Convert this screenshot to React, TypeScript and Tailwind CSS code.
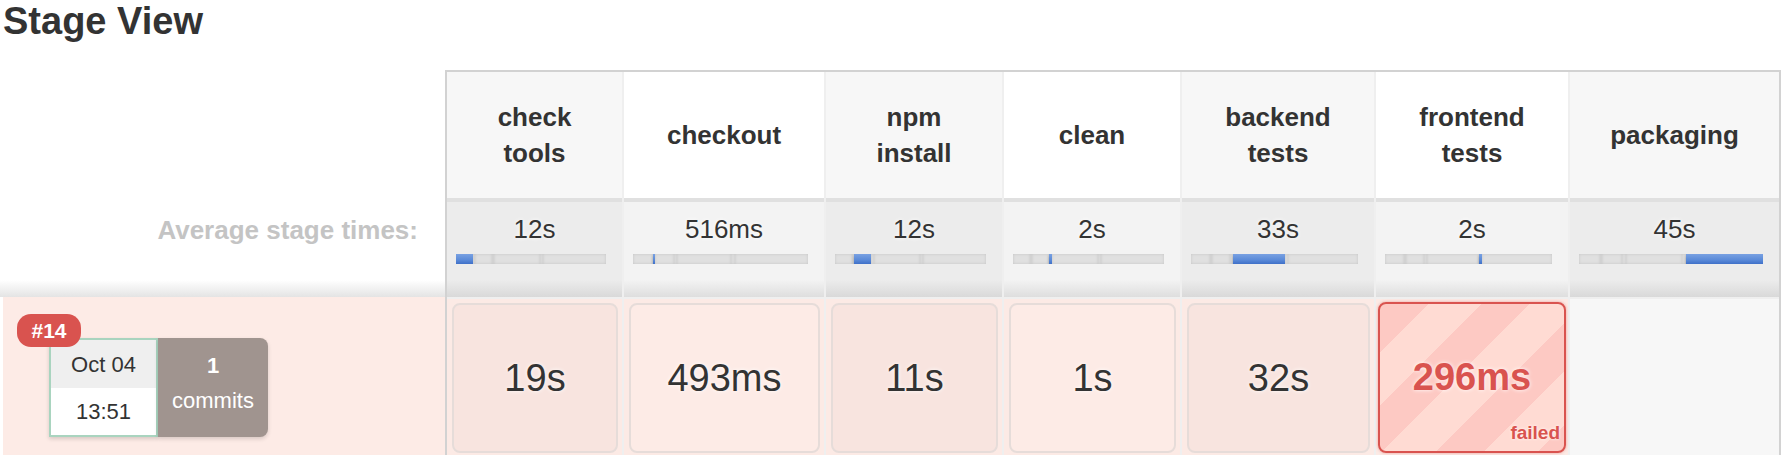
import React from "react";

type Stage = {
  name: string[];
  avg: string;
  avgSec: number;
  time: string;
  width: string;
  failed?: boolean;
  skipped?: boolean;
};

const stages: Stage[] = [
  { name: ["check", "tools"], avg: "12s", avgSec: 12, time: "19s", width: "w-[175px]" },
  { name: ["checkout"], avg: "516ms", avgSec: 0.516, time: "493ms", width: "w-[200px]" },
  { name: ["npm", "install"], avg: "12s", avgSec: 12, time: "11s", width: "w-[176px]" },
  { name: ["clean"], avg: "2s", avgSec: 2, time: "1s", width: "w-[176px]" },
  { name: ["backend", "tests"], avg: "33s", avgSec: 33, time: "32s", width: "w-[192px]" },
  { name: ["frontend", "tests"], avg: "2s", avgSec: 2, time: "296ms", width: "w-[192px]", failed: true },
  { name: ["packaging"], avg: "45s", avgSec: 45, time: "", width: "w-[209px]", skipped: true },
];

const total = stages.reduce((sum, s) => sum + s.avgSec, 0);

// relative time bar, the current stage is highlighted in blue
const TimeBar = ({ current }: { current: number }) => (
  <div className="ml-[9px] mr-[16px] mt-[7px] flex h-[10px] overflow-hidden bg-[#d9d9d9]">
    {stages.map((s, i) => (
      <div
        key={i}
        style={{ width: `${(s.avgSec / total) * 100}%` }}
        className={
          i === current
            ? "min-w-[2px] bg-[linear-gradient(#79a1e2,#5a8ad8_60%,#3f70c8)] shadow-[0_2px_3px_rgba(0,0,0,0.25)]"
            : "min-w-[2px] bg-[#e0e0e0] shadow-[inset_0_0_3px_rgba(0,0,0,0.12)]"
        }
      />
    ))}
  </div>
);

const StageColumn = ({ stage, index }: { stage: Stage; index: number }) => {
  const odd = index % 2 === 0;
  return (
    <div className={`${stage.width} flex flex-col`}>
      <div
        className={`flex h-[126px] flex-col items-center justify-center text-center text-[26px] font-bold leading-[36px] text-[#333] ${
          odd ? "bg-[#f7f7f7]" : "bg-white"
        }`}
      >
        {stage.name.map((n) => (
          <span key={n}>{n}</span>
        ))}
      </div>
      <div
        className={`h-[99px] border-t-4 border-[#e0e0e0] pt-[9px] ${
          odd
            ? "bg-[linear-gradient(#ececec_0,#ececec_78px,#d9d9d9)]"
            : "bg-[linear-gradient(#f3f3f3_0,#f3f3f3_78px,#dedede)]"
        }`}
      >
        <div className="text-center text-[26px] leading-[36px] text-[#333] [text-shadow:0_0_4px_#fff]">
          {stage.avg}
        </div>
        <TimeBar current={index} />
      </div>
      {stage.skipped ? (
        <div className="mt-[2px] h-[156px] bg-[#f7f7f7]" />
      ) : stage.failed ? (
        <div className="mt-[2px] h-[156px] bg-[#fceae5] px-[2px] pt-[3px]">
          <div className="relative flex h-[151px] items-center justify-center rounded-[8px] border-2 border-[#d9534f] bg-[repeating-linear-gradient(135deg,#fdc9c3_0,#fdc9c3_34px,#ffdbd3_34px,#ffdbd3_72px)] shadow-[0_0_3px_rgba(217,83,79,0.5)]">
            <span className="text-[38px] font-bold text-[#d9534f] [text-shadow:0_0_4px_#fff]">
              {stage.time}
            </span>
            <span className="absolute bottom-[9px] right-[4px] text-[19px] font-bold leading-[19px] text-[#d9534f] [text-shadow:0_0_3px_#fff]">
              failed
            </span>
          </div>
        </div>
      ) : (
        <div className="mt-[2px] h-[156px] bg-[#fceae5] py-[4px] pl-[5px] pr-[4px]">
          <div
            className={`flex h-[150px] items-center justify-center rounded-[8px] border-2 border-[#e6dcd9] ${
              odd ? "bg-[#f8e4df]" : "bg-[#fdebe6]"
            }`}
          >
            <span className="text-[38px] text-[#333] [text-shadow:0_0_4px_#fff]">{stage.time}</span>
          </div>
        </div>
      )}
    </div>
  );
};

export default function App() {
  return (
    <div className="h-[455px] w-[1783px] overflow-hidden bg-white font-['Liberation_Sans',Arial,sans-serif]">
      <h1 className="pl-[3px] text-[38px] font-bold leading-[42px] text-[#333]">Stage View</h1>
      <div className="mt-[28px] flex">
        <div className="flex w-[445px] flex-col">
          <div className="h-[128px]" />
          <div className="h-[99px] bg-[linear-gradient(#fff_0,#fff_82px,#e4e4e4)] pr-[27px] pt-[14px] text-right text-[26px] font-bold leading-[36px] text-[#c4c4c4]">
            Average stage times:
          </div>
          <div className="relative ml-[3px] h-[158px] bg-[#fdebe6] pl-[46px] pt-[41px]">
            <div className="flex">
              <div className="flex h-[99px] w-[109px] flex-col border-2 border-[#a9d4bf] text-[22px] text-[#333] shadow-[0_2px_4px_rgba(0,0,0,0.15)]">
                <div className="flex h-[48px] items-center justify-center bg-[#efefef]">Oct 04</div>
                <div className="flex flex-1 items-center justify-center bg-white">13:51</div>
              </div>
              <div className="h-[99px] w-[110px] rounded-r-[8px] bg-[#a0948f] pt-[10px] text-center text-[22px] leading-[35px] text-white shadow-[0_2px_4px_rgba(0,0,0,0.15)]">
                <div className="font-bold">1</div>
                <div>commits</div>
              </div>
            </div>
            <span className="absolute left-[14px] top-[17px] flex h-[33px] w-[64px] items-center justify-center rounded-[14px] bg-[#d9534f] text-[21px] font-bold text-white">
              #14
            </span>
          </div>
        </div>
        <div className="flex gap-[2px] border-2 border-b-0 border-[#d2d2d2] bg-[#efefef]">
          {stages.map((s, i) => (
            <StageColumn key={i} stage={s} index={i} />
          ))}
        </div>
      </div>
    </div>
  );
}
